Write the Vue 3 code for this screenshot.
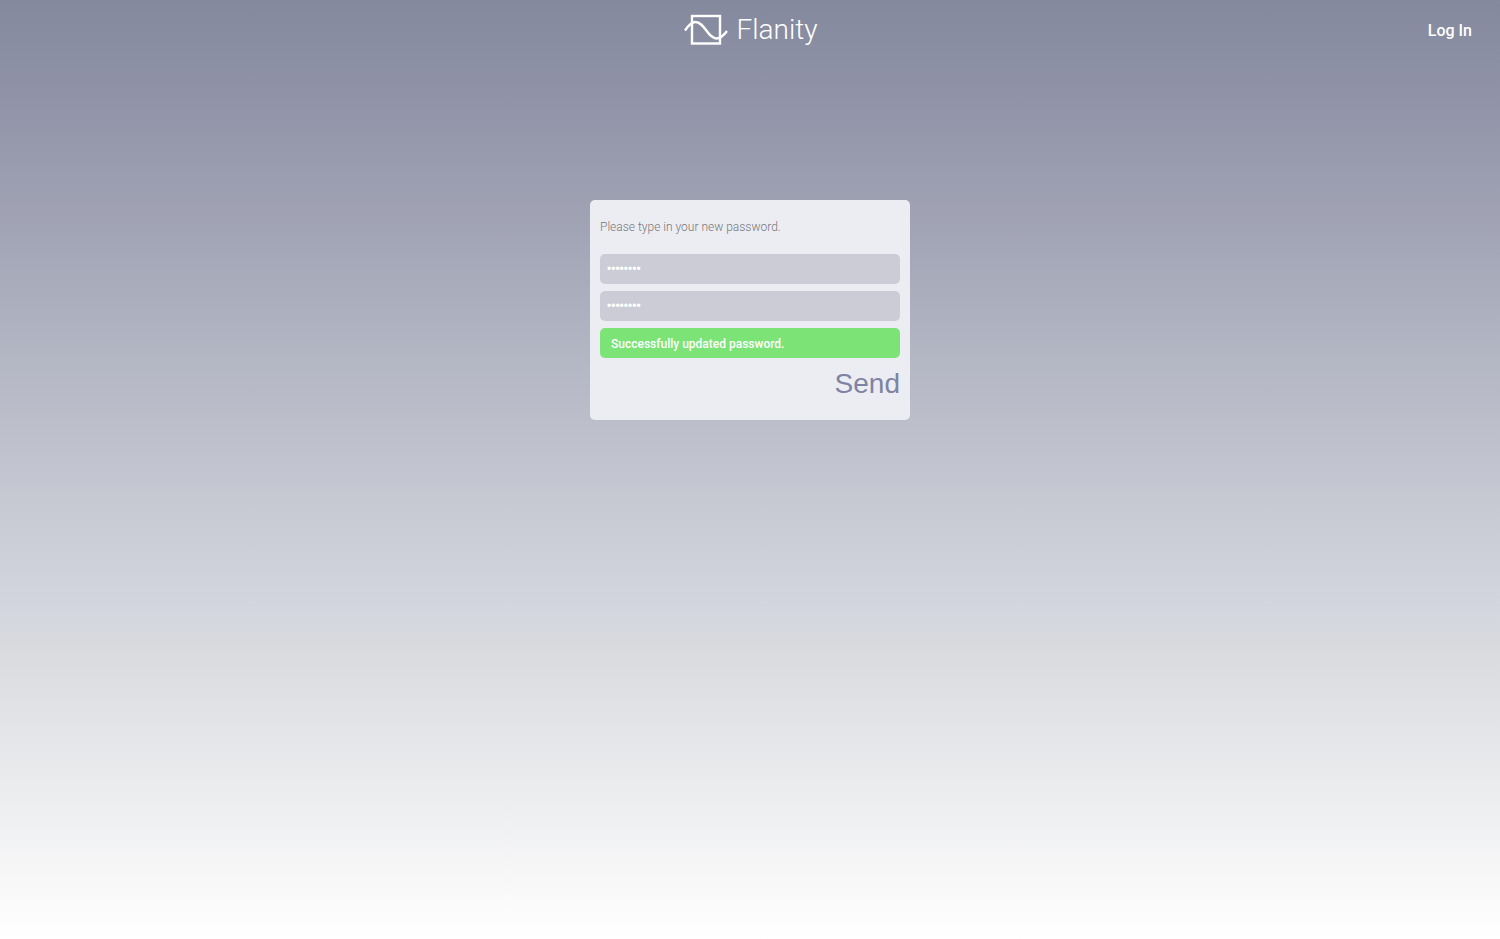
<script setup>
import { ref } from 'vue'

const password = ref('password')
const confirmation = ref('password')
const message = ref('Successfully updated password.')
</script>

<template>
  <div class="page">
    <header class="bar">
      <a class="brand" href="#" aria-label="Flanity">
        <svg class="mark" width="44" height="32" viewBox="0 0 44 32" aria-hidden="true">
          <rect x="8" y="2" width="28" height="27.500" />
          <path d="M1 16.500 C4 12 7 8 11.500 8 C20.500 8 24 24.500 32.500 24.500 C37 24.500 40 21 43 17" />
        </svg>
        <span class="name">Flanity</span>
      </a>
      <a class="login" href="#">Log In</a>
    </header>
    <main>
      <form class="card" @submit.prevent>
        <p class="hint">Please type in your new password.</p>
        <input v-model="password" class="field" type="password" aria-label="New password" autocomplete="new-password" />
        <input v-model="confirmation" class="field" type="password" aria-label="Repeat new password" autocomplete="new-password" />
        <p class="success" role="status">{{ message }}</p>
        <button class="send" type="submit">Send</button>
      </form>
    </main>
  </div>
</template>

<style>
body {
  margin: 0;
}
</style>

<style scoped>
.page {
  min-height: 100vh;
  font-family: Roboto, sans-serif;
  background: linear-gradient(#84899d 0%, #9698ac 15%, #b3b6c3 38%, #c6c8d2 53%, #d0d3dc 62%, #d5d7e0 66%, #d8d9dd 68%, #eaebed 83%, #ffffff 100%);
}
.bar {
  display: grid;
  grid-template-columns: 1fr auto 1fr;
  align-items: center;
  height: 60px;
  padding: 0 28px;
}
.brand {
  grid-column: 2;
  display: flex;
  align-items: center;
  gap: 8px;
  padding-left: 2px;
  color: #fff;
  text-decoration: none;
}
.mark {
  fill: none;
  stroke: #fff;
  stroke-width: 2.4;
}
.name {
  font-size: 28px;
  font-weight: 300;
  line-height: 32px;
}
.login {
  justify-self: end;
  color: #fff;
  font-size: 16px;
  font-weight: 500;
  line-height: 20px;
  padding-top: 2px;
  text-decoration: none;
}
.card {
  display: flex;
  flex-direction: column;
  gap: 7px;
  box-sizing: border-box;
  width: 320px;
  max-width: 100%;
  min-height: 220px;
  margin: 140px auto 0;
  padding: 10px;
  border-radius: 5px;
  background: #ecedf3;
}
.hint {
  margin: 0;
  padding: 9px 0 12px;
  color: #777;
  font-size: 12px;
  font-weight: 300;
  line-height: 16px;
}
.field {
  box-sizing: border-box;
  width: 100%;
  height: 30px;
  padding: 0 7px;
  border: 0;
  border-radius: 5px;
  outline: 0;
  background: #ccccd6;
  color: #fff;
  font: 12px "Liberation Sans", Arial, sans-serif;
}
.success {
  margin: 0;
  padding: 2px 11px 0;
  border-radius: 5px;
  background: #7ce377;
  color: #fff;
  font-size: 12px;
  font-weight: 500;
  line-height: 28px;
}
.send {
  align-self: flex-end;
  padding: 0;
  border: 0;
  background: none;
  color: #7f83a3;
  font: 28px/38px "Liberation Sans", Arial, sans-serif;
  cursor: pointer;
}
</style>
